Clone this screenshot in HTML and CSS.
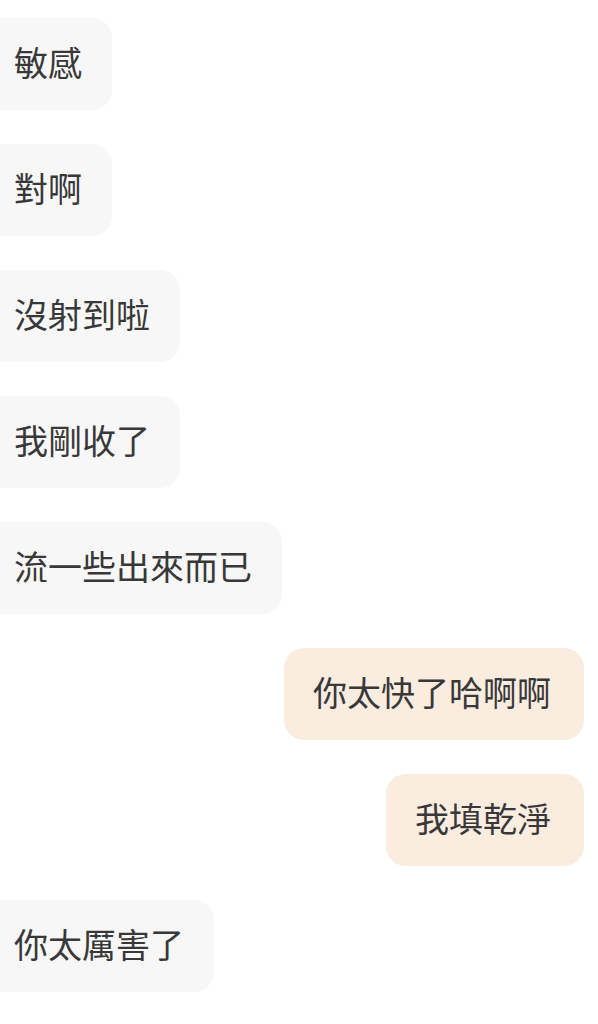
FILE: index.html
```html
<!DOCTYPE html>
<html lang="zh-Hant">
<head>
<meta charset="utf-8">
<link rel="stylesheet" href="styles.css">
</head>
<body>
<div class="chat">
  <div class="row in"><div class="bubble">敏感</div></div>
  <div class="row in"><div class="bubble">對啊</div></div>
  <div class="row in"><div class="bubble">沒射到啦</div></div>
  <div class="row in"><div class="bubble">我剛收了</div></div>
  <div class="row in"><div class="bubble">流一些出來而已</div></div>
  <div class="row out"><div class="bubble">你太快了哈啊啊</div></div>
  <div class="row out"><div class="bubble">我填乾淨</div></div>
  <div class="row in"><div class="bubble">你太厲害了</div></div>
</div>
</body>
</html>
```

FILE: styles.css
```css
html, body {
  margin: 0;
  padding: 0;
  background: #ffffff;
  overflow: hidden;
}
.chat {
  display: flex;
  flex-direction: column;
  gap: 34px;
  padding-top: 18px;
  font-family: "Noto Sans CJK TC", "Noto Sans", sans-serif;
  font-size: 34px;
  color: #383838;
}
.row {
  display: flex;
}
.row.in {
  justify-content: flex-start;
}
.row.out {
  justify-content: flex-end;
  padding-right: 14px;
}
.bubble {
  box-sizing: border-box;
  height: 92px;
  display: flex;
  align-items: center;
  border-radius: 20px;
  white-space: nowrap;
  line-height: 1;
  padding-bottom: 4px;
}
.in .bubble {
  background: #f7f7f7;
  margin-left: -16px;
  padding-left: 30px;
  padding-right: 30px;
}
.out .bubble {
  background: #fbece0;
  padding-left: 29px;
  padding-right: 33px;
}
```
